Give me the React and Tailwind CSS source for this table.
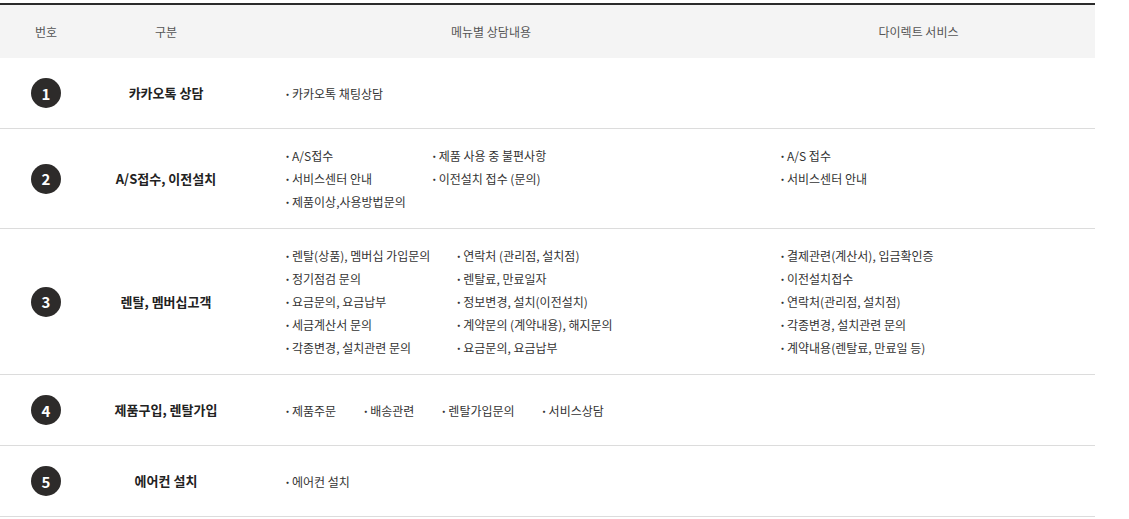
import React from "react";

const font = { fontFamily: '"Noto Sans CJK KR", "Noto Sans", sans-serif' };

function List({ items }) {
  return (
    <ul className="flex flex-col">
      {items.map((t, i) => (
        <li key={i} className="leading-[23px] text-[12px] text-[#333] whitespace-nowrap flex">
          <span className="inline-block w-[8px] font-bold">·</span>
          <span>{t}</span>
        </li>
      ))}
    </ul>
  );
}

function Num({ n }) {
  return (
    <div className="w-[30px] h-[30px] rounded-full bg-[#2d2b2a] text-white flex items-center justify-center text-[15px] font-bold leading-none">
      {n}
    </div>
  );
}

function Row({ n, title, children, direct }) {
  return (
    <div className="grid grid-cols-[92px_148px_502px_353px] border-b border-[#dcdcdc] min-h-[71px] py-[15px] items-center">
      <div className="flex justify-center">
        <Num n={n} />
      </div>
      <div className="text-center text-[13px] font-bold text-[#222]">{title}</div>
      <div className="pl-[44px]">{children}</div>
      <div className="pl-[37px] self-start">{direct}</div>
    </div>
  );
}

export default function App() {
  return (
    <div className="bg-white w-[1129px] h-[519px] pt-[3px]" style={font}>
      <div className="w-[1095px] border-t-2 border-[#2b2b2b]">
        <div className="grid grid-cols-[92px_148px_502px_353px] h-[53px] bg-[#f4f4f4] items-center text-[12px] text-[#555]">
          <div className="text-center">번호</div>
          <div className="text-center">구분</div>
          <div className="text-center">메뉴별 상담내용</div>
          <div className="text-center">다이렉트 서비스</div>
        </div>
        <Row n="1" title="카카오톡 상담">
          <List items={["카카오톡 채팅상담"]} />
        </Row>
        <Row
          n="2"
          title="A/S접수, 이전설치"
          direct={<List items={["A/S 접수", "서비스센터 안내"]} />}
        >
          <div className="flex gap-[25px] items-start">
            <List items={["A/S접수", "서비스센터 안내", "제품이상,사용방법문의"]} />
            <List items={["제품 사용 중 불편사항", "이전설치 접수 (문의)"]} />
          </div>
        </Row>
        <Row
          n="3"
          title="렌탈, 멤버십고객"
          direct={
            <List
              items={[
                "결제관련(계산서), 입금확인증",
                "이전설치접수",
                "연락처(관리점, 설치점)",
                "각종변경, 설치관련 문의",
                "계약내용(렌탈료, 만료일 등)",
              ]}
            />
          }
        >
          <div className="flex gap-[25px] items-start">
            <List
              items={[
                "렌탈(상품), 멤버십 가입문의",
                "정기점검 문의",
                "요금문의, 요금납부",
                "세금계산서 문의",
                "각종변경, 설치관련 문의",
              ]}
            />
            <List
              items={[
                "연락처 (관리점, 설치점)",
                "렌탈료, 만료일자",
                "정보변경, 설치(이전설치)",
                "계약문의 (계약내용), 해지문의",
                "요금문의, 요금납부",
              ]}
            />
          </div>
        </Row>
        <Row n="4" title="제품구입, 렌탈가입">
          <div className="flex gap-[26px]">
            <List items={["제품주문"]} />
            <List items={["배송관련"]} />
            <List items={["렌탈가입문의"]} />
            <List items={["서비스상담"]} />
          </div>
        </Row>
        <Row n="5" title="에어컨 설치">
          <List items={["에어컨 설치"]} />
        </Row>
      </div>
    </div>
  );
}
